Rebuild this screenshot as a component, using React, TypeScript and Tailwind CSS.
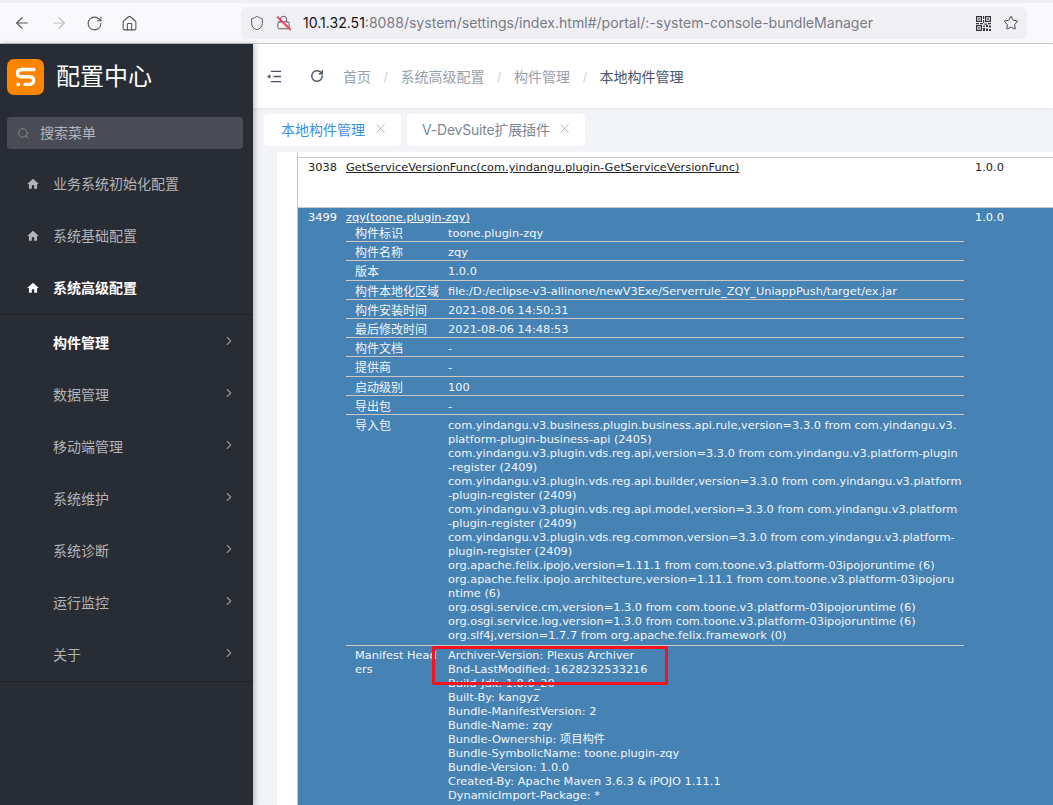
import React from 'react';
import { ArrowLeft, ArrowRight, RotateCw, Home, Shield, Lock, Star, Search, X, ChevronRight } from 'lucide-react';

const CJK = "font-['Inter','Noto_Sans_CJK_SC',sans-serif]";

const TOP_MENU = [
  { label: '业务系统初始化配置', active: false },
  { label: '系统基础配置', active: false },
  { label: '系统高级配置', active: true },
];

const SUB_MENU = ['构件管理', '数据管理', '移动端管理', '系统维护', '系统诊断', '运行监控', '关于'];

const DETAILS = [
  ['构件标识', 'toone.plugin-zqy'],
  ['构件名称', 'zqy'],
  ['版本', '1.0.0'],
  ['构件本地化区域', 'file:/D:/eclipse-v3-allinone/newV3Exe/Serverrule_ZQY_UniappPush/target/ex.jar'],
  ['构件安装时间', '2021-08-06 14:50:31'],
  ['最后修改时间', '2021-08-06 14:48:53'],
  ['构件文档', '-'],
  ['提供商', '-'],
  ['启动级别', '100'],
  ['导出包', '-'],
];

const IMPORTS = [
  'com.yindangu.v3.business.plugin.business.api.rule,version=3.3.0 from com.yindangu.v3.',
  'platform-plugin-business-api (2405)',
  'com.yindangu.v3.plugin.vds.reg.api,version=3.3.0 from com.yindangu.v3.platform-plugin',
  '-register (2409)',
  'com.yindangu.v3.plugin.vds.reg.api.builder,version=3.3.0 from com.yindangu.v3.platform',
  '-plugin-register (2409)',
  'com.yindangu.v3.plugin.vds.reg.api.model,version=3.3.0 from com.yindangu.v3.platform',
  '-plugin-register (2409)',
  'com.yindangu.v3.plugin.vds.reg.common,version=3.3.0 from com.yindangu.v3.platform-',
  'plugin-register (2409)',
  'org.apache.felix.ipojo,version=1.11.1 from com.toone.v3.platform-03ipojoruntime (6)',
  'org.apache.felix.ipojo.architecture,version=1.11.1 from com.toone.v3.platform-03ipojoru',
  'ntime (6)',
  'org.osgi.service.cm,version=1.3.0 from com.toone.v3.platform-03ipojoruntime (6)',
  'org.osgi.service.log,version=1.3.0 from com.toone.v3.platform-03ipojoruntime (6)',
  'org.slf4j,version=1.7.7 from org.apache.felix.framework (0)',
];

const MANIFEST = [
  'Archiver-Version: Plexus Archiver',
  'Bnd-LastModified: 1628232533216',
  'Build-Jdk: 1.8.0_20',
  'Built-By: kangyz',
  'Bundle-ManifestVersion: 2',
  'Bundle-Name: zqy',
  'Bundle-Ownership: 项目构件',
  'Bundle-SymbolicName: toone.plugin-zqy',
  'Bundle-Version: 1.0.0',
  'Created-By: Apache Maven 3.6.3 & iPOJO 1.11.1',
  'DynamicImport-Package: *',
];

function HomeSolid({ className }: { className?: string }) {
  return (
    <svg viewBox="0 0 24 24" fill="currentColor" className={className}>
      <path d="M10 20v-6h4v6h5v-8h3L12 3 2 12h3v8z" />
    </svg>
  );
}

function QrIcon() {
  return (
    <svg viewBox="0 0 15 15" className="w-[15px] h-[15px] text-[#33333a]" fill="currentColor">
      <path fillRule="evenodd" d="M0 0h6v6H0zM1.2 1.2v3.6h3.6V1.2zM9 0h6v6H9zM10.2 1.2v3.6h3.6V1.2zM0 9h6v6H0zM1.2 10.2v3.6h3.6v-3.6z" />
      <path d="M2.2 2.2h1.6v1.6H2.2zM11.2 2.2h1.6v1.6h-1.6zM2.2 11.2h1.6v1.6H2.2zM7 0h1.2v3H7zM7 4h1.2v3H7zM0 7h3v1.2H0zM4 7h3v1.2H4zM8.5 7.5H11v1.2H8.5zM12 7h3v1.2h-3zM7 9.5h2v1.2H7zM10 9h2v2h-2zM13 9.5h2v2h-2zM7 12h2v3H7zM10 12.5h2V15h-2zM13 13h2v2h-2z" />
    </svg>
  );
}

function Logo() {
  return (
    <div className="w-[37px] h-9 rounded-[7px] bg-[#ff8500] flex items-center justify-center">
      <svg viewBox="0 0 37 36" className="w-[37px] h-9" fill="none" stroke="#fff" strokeWidth="3.4" strokeLinecap="round">
        <path d="M27 10.5H15c-3 0-4.5 1.6-4.5 3.7s1.5 3.6 4.5 3.6h7c3 0 4.6 1.6 4.6 3.7s-1.6 3.9-4.6 3.9h-4" />
        <path d="M11 25.5h.4" />
      </svg>
    </div>
  );
}

function Sidebar() {
  return (
    <aside className={`w-[253px] shrink-0 h-full bg-[#282c34] shadow-[2px_0_5px_rgba(0,21,41,0.25)] z-10 ${CJK}`}>
      <div className="h-[73px] pl-[7px] pt-[15px] flex items-start gap-3">
        <Logo />
        <div className="text-2xl leading-[36px] text-white">配置中心</div>
      </div>
      <div className="ml-[7px] w-[236px] h-8 rounded bg-[#4a4b55] flex items-center pl-[10px] gap-[10px] text-[#b4b5ba] text-sm">
        <Search size={13} strokeWidth={1.5} className="text-[#8d8e95]" />
        <span>搜索菜单</span>
      </div>
      <div className="pt-[9px] border-b border-[#1f2229]">
        {TOP_MENU.map((m) => (
          <div key={m.label} className={`h-[52px] flex items-center pl-[26px] gap-[13px] text-sm ${m.active ? 'text-white font-bold' : 'text-[#b2b4b8]'}`}>
            <HomeSolid className="w-[14px] h-[14px]" />
            <span>{m.label}</span>
          </div>
        ))}
      </div>
      <div className="border-b border-[#1f2229] pt-[2px]">
        {SUB_MENU.map((m, i) => (
          <div key={m} className={`h-[52px] flex items-center pl-[53px] pr-[17px] justify-between text-sm ${i === 0 ? 'text-white font-bold' : 'text-[#b2b4b8]'}`}>
            <span>{m}</span>
            <ChevronRight size={14} strokeWidth={2} className="text-[#8f9196] -mt-1" />
          </div>
        ))}
      </div>
    </aside>
  );
}

function BrowserBar() {
  return (
    <div className="h-11 shrink-0 bg-[#f9f9fb] border-t-[3px] border-t-[#f0f0f4] border-b border-b-[#c8c8cb] flex items-center pl-[13px] pr-[26px]">
      <ArrowLeft size={18} strokeWidth={1.5} className="text-[#55555c]" />
      <ArrowRight size={18} strokeWidth={1.5} className="text-[#bdbdc1] ml-[19px]" />
      <RotateCw size={17} strokeWidth={1.5} className="text-[#55555c] ml-[18px]" />
      <Home size={17} strokeWidth={1.5} className="text-[#55555c] ml-[18px]" />
      <div className="ml-[103px] flex-1 h-8 rounded-md bg-[#f0f0f4] flex items-center pl-[8px] pr-2 font-['Inter',sans-serif] text-[14.07px]">
        <Shield size={16} strokeWidth={1.5} className="text-[#55555c]" />
        <span className="relative ml-[11px] w-[16px] h-[16px]">
          <Lock size={15} strokeWidth={1.5} className="text-[#55555c]" />
          <span className="absolute left-[7px] -top-[1px] h-[19px] w-[1.5px] bg-[#ff3b5c] -rotate-45" />
        </span>
        <span className="ml-[11px] whitespace-nowrap text-[#15141a]">10.1.32.51</span>
        <span className="whitespace-nowrap text-[#7b7b86]">:8088/system/settings/index.html#/portal/:-system-console-bundleManager</span>
        <span className="flex-1" />
        <QrIcon />
        <Star size={16} strokeWidth={1.5} className="text-[#45454c] ml-[12px]" />
      </div>
    </div>
  );
}

function PageHeader() {
  const crumbs = ['首页', '系统高级配置', '构件管理'];
  return (
    <div className={`h-[64px] shrink-0 bg-white flex items-center pl-[14px] text-sm shadow-[0_1px_4px_rgba(0,21,41,0.08)] ${CJK}`}>
      <svg viewBox="0 0 16 14" className="w-[15px] h-[13px] text-[#4a5568]" fill="none" stroke="currentColor" strokeWidth="1.5">
        <path d="M4 1.5h11M7 7h8M4 12.5h11" />
        <path d="M0 7l3.5-2.5v5z" fill="currentColor" stroke="none" />
      </svg>
      <RotateCw size={14} strokeWidth={2.5} className="ml-[28px] text-[#4a5568]" />
      <div className="ml-[19px] pt-[2px] flex items-center whitespace-nowrap">
        {crumbs.map((c) => (
          <React.Fragment key={c}>
            <span className="text-[#97a0ac]">{c}</span>
            <span className="text-[#c9ccd1] mx-[12.6px] text-xs">/</span>
          </React.Fragment>
        ))}
        <span className="text-[#4a5568]">本地构件管理</span>
      </div>
    </div>
  );
}

function Tabs() {
  return (
    <div className={`h-[44px] shrink-0 flex gap-[6px] pl-[11px] pt-[6px] text-sm ${CJK}`}>
      <div className="h-8 w-[137px] bg-white rounded flex items-center pl-[17px] text-[#3a8ee6] whitespace-nowrap">
        本地构件管理
        <X size={15} strokeWidth={1} className="text-[#8b929c] ml-[8px] -mt-1" />
      </div>
      <div className="h-8 w-[178px] bg-white rounded flex items-center pl-[15px] text-[#7d8896] whitespace-nowrap">
        <span className="tracking-[-0.2px]">V-DevSuite扩展插件</span>
        <X size={15} strokeWidth={1} className="text-[#8b929c] ml-[7px] -mt-1" />
      </div>
    </div>
  );
}

function DetailRow({ label, children, height }: { label: React.ReactNode; children: React.ReactNode; height?: string }) {
  return (
    <div className={`flex border-b border-[#c8c8c8] ${height ?? 'h-[19.2px] pt-[3px]'} last:border-b-0`}>
      <div className="w-[102px] pl-[9px] pr-[9px] shrink-0 overflow-hidden">{label}</div>
      <div className="whitespace-nowrap">{children}</div>
    </div>
  );
}

function BundleTable() {
  return (
    <div className="relative flex-1 min-h-0 overflow-hidden ml-[24px] bg-white pl-[20px] font-['DejaVu_Sans','Noto_Sans_CJK_SC',sans-serif] text-[11.35px] leading-[14px]">
      <div className="h-[5px] border-l border-[#c8c8c8]" />
      <div className="border-l border-t border-[#c8c8c8] h-[50px] flex pt-[2px] text-[#222]">
        <div className="w-[48px] pl-[10px] shrink-0">3038</div>
        <div className="w-[629px] shrink-0 underline whitespace-nowrap">GetServiceVersionFunc(com.yindangu.plugin-GetServiceVersionFunc)</div>
        <div>1.0.0</div>
      </div>
      <div className="border-l border-t border-[#c8c8c8] bg-[#4682b4] text-white flex pt-[2px] h-[800px]">
        <div className="w-[48px] pl-[10px] shrink-0">3499</div>
        <div className="w-[629px] shrink-0">
          <div className="underline h-[13px] whitespace-nowrap">zqy(toone.plugin-zqy)</div>
          <div className="w-[618px] text-[#f2f6fa]">
            {DETAILS.map(([k, v]) => (
              <DetailRow key={k} label={<span className="text-xs">{k}</span>}>{v}</DetailRow>
            ))}
            <DetailRow label={<span className="text-xs">导入包</span>} height="h-[231px] pt-[3px]">
              {IMPORTS.map((l) => (
                <div key={l}>{l}</div>
              ))}
            </DetailRow>
            <DetailRow label={<span className="break-all">Manifest Headers</span>} height="pt-[2px]">
              {MANIFEST.map((l) => (
                <div key={l}>{l}</div>
              ))}
            </DetailRow>
          </div>
        </div>
        <div>1.0.0</div>
      </div>
      {/* red annotation drawn on the screenshot */}
      <div className="absolute left-[155px] top-[494px] w-[236px] h-[39px] border-[3px] border-[#f5141e] rounded-[2px]" />
    </div>
  );
}

export default function App() {
  return (
    <div className="w-[1053px] h-[805px] overflow-hidden flex flex-col">
      <BrowserBar />
      <div className="flex-1 min-h-0 flex">
        <Sidebar />
        <main className="flex-1 min-w-0 flex flex-col bg-[#f3f4f7]">
          <PageHeader />
          <Tabs />
          <BundleTable />
        </main>
      </div>
    </div>
  );
}
